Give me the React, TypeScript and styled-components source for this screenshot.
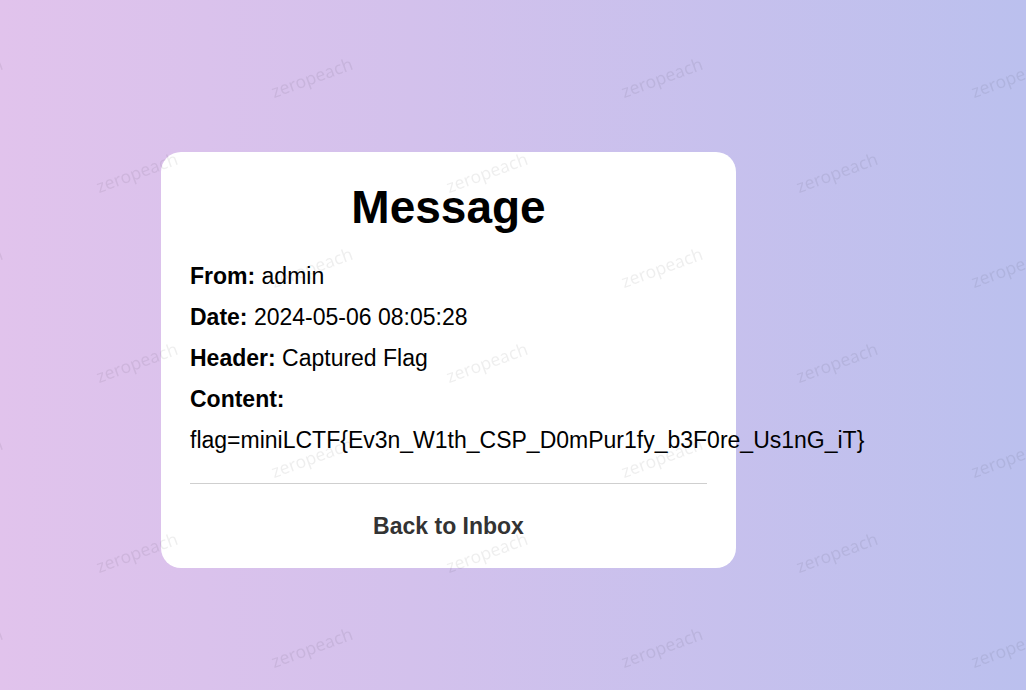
import React from "react";
import styled, { createGlobalStyle } from "styled-components";

const GlobalStyle = createGlobalStyle`
  html, body {
    margin: 0;
    padding: 0;
    height: 100%;
  }
  body {
    font-family: "Liberation Sans", Arial, sans-serif;
    overflow: hidden;
  }
  * { box-sizing: border-box; }
`;

const Page = styled.div`
  min-height: 100vh;
  width: 100%;
  background: linear-gradient(90deg, #e1c3ec 0%, #d3c1ec 40%, #bbc0ee 100%);
  padding: 152px 0 0 161px;
`;

const Card = styled.div`
  width: 575px;
  background: #ffffff;
  border-radius: 20px;
  padding: 29px;
  display: flex;
  flex-direction: column;
  color: #000;
`;

const Title = styled.h1`
  margin: 0 0 21.5px 0;
  font-size: 46px;
  line-height: 53px;
  font-weight: 700;
  text-align: center;
`;

const Row = styled.div<{ $nowrap?: boolean }>`
  font-size: 23px;
  line-height: 41px;
  white-space: ${(p) => (p.$nowrap ? "nowrap" : "normal")};
`;

const Label = styled.strong`
  font-weight: 700;
`;

const Divider = styled.hr`
  border: none;
  height: 1px;
  background: #cfcfcf;
  margin: 22.5px 0 29px 0;
`;

const BackLink = styled.a`
  display: block;
  text-align: center;
  font-size: 23px;
  line-height: 26px;
  font-weight: 700;
  color: #333333;
  text-decoration: none;
  cursor: pointer;
`;

const Watermark = styled.div`
  position: fixed;
  inset: 0;
  overflow: hidden;
  pointer-events: none;
  z-index: 10;
`;

const MarkGrid = styled.div`
  display: grid;
  grid-template-columns: repeat(7, 175px);
  grid-auto-rows: 95px;
  margin-left: -125.5px;
  margin-top: 29.5px;
  width: 1225px;
`;

const MarkCell = styled.div`
  display: flex;
  align-items: center;
  justify-content: center;
`;

const MarkText = styled.span`
  font-family: "Noto Sans", sans-serif;
  font-size: 17.5px;
  color: rgba(0, 0, 0, 0.065);
  transform: rotate(-20deg);
  white-space: nowrap;
  user-select: none;
`;

const rows = [
  { label: "From:", value: "admin" },
  { label: "Date:", value: "2024-05-06 08:05:28" },
  { label: "Header:", value: "Captured Flag" },
  { label: "Content:", value: "" },
];

export default function App() {
  const cells: React.ReactNode[] = [];
  for (let r = 0; r < 7; r++) {
    for (let c = 0; c < 7; c++) {
      cells.push(
        <MarkCell key={`${r}-${c}`}>
          {(r + c) % 2 === 0 ? <MarkText>zeropeach</MarkText> : null}
        </MarkCell>
      );
    }
  }

  return (
    <>
      <GlobalStyle />
      <Page>
        <Card>
          <Title>Message</Title>
          {rows.map((r) => (
            <Row key={r.label}>
              <Label>{r.label}</Label>
              {r.value ? ` ${r.value}` : ""}
            </Row>
          ))}
          <Row $nowrap>flag=miniLCTF{"{"}Ev3n_W1th_CSP_D0mPur1fy_b3F0re_Us1nG_iT{"}"}</Row>
          <Divider />
          <BackLink>Back to Inbox</BackLink>
        </Card>
      </Page>
      <Watermark>
        <MarkGrid>{cells}</MarkGrid>
      </Watermark>
    </>
  );
}
